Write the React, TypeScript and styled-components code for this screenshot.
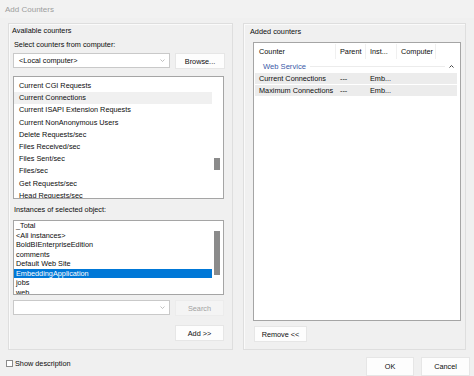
import styled, { createGlobalStyle } from 'styled-components';

const GlobalStyle = createGlobalStyle`
  body {
    margin: 0;
    background: #f0f0f0;
    font-family: "Liberation Sans", Arial, sans-serif;
  }
`;

const Dialog = styled.div`
  width: 474px;
  height: 376px;
  background: #f0f0f0;
  display: flex;
  flex-direction: column;
  overflow: hidden;
  font-size: 7.3px;
  color: #0d0d0d;
`;

const TitleBar = styled.div`
  height: 20px;
  display: flex;
  align-items: center;
  padding: 0 5px;
  font-size: 8px;
  color: #9d9d9d;
  background: #f2f2f2;
`;

const Body = styled.div`
  display: flex;
  gap: 10px;
  padding: 5px 8px 0 8px;
`;

const GroupBox = styled.div<{ w: number }>`
  width: ${({ w }) => w}px;
  height: 327px;
  box-sizing: border-box;
  border: 1px solid #dedede;
  box-shadow: inset 1px 1px 0 #fafafa;
  display: flex;
  flex-direction: column;
  align-items: flex-start;
`;

const Label = styled.div<{ mt?: number; ml?: number }>`
  line-height: 9px;
  height: 9px;
  white-space: nowrap;
  margin-top: ${({ mt }) => mt || 0}px;
  margin-left: ${({ ml }) => ml || 0}px;
`;

const Row = styled.div<{ mt?: number; ml?: number }>`
  display: flex;
  gap: 5px;
  margin-top: ${({ mt }) => mt || 0}px;
  margin-left: ${({ ml }) => ml || 0}px;
`;

const Combo = styled.div`
  width: 157px;
  height: 15px;
  box-sizing: border-box;
  background: #fff;
  border: 1px solid #c9c9c9;
  display: flex;
  align-items: center;
  justify-content: space-between;
  padding: 0 4px 0 5px;
`;

const Button = styled.div<{ w: number; h?: number; disabled?: boolean }>`
  width: ${({ w }) => w}px;
  height: ${({ h }) => h || 16}px;
  box-sizing: border-box;
  background: ${({ disabled }) => (disabled ? '#f4f4f4' : '#fdfdfd')};
  border: 1px solid ${({ disabled }) => (disabled ? '#ececec' : '#e6e6e6')};
  color: ${({ disabled }) => (disabled ? '#a2a2a2' : '#0d0d0d')};
  display: flex;
  align-items: center;
  justify-content: center;
  white-space: nowrap;
`;

const Indent = styled.div`
  margin-left: 4px;
`;

const ListBox = styled.div<{ h: number; mt: number; padTop?: number }>`
  position: relative;
  width: 211px;
  height: ${({ h }) => h}px;
  margin-top: ${({ mt }) => mt}px;
  box-sizing: border-box;
  background: #fff;
  border: 1px solid #a5a5a5;
  padding-top: ${({ padTop }) => padTop || 0}px;
  overflow: hidden;
`;

const ListItem = styled.div<{ h: number; indent: number; state?: 'hover' | 'selected' }>`
  width: 198px;
  height: ${({ h }) => h}px;
  line-height: ${({ h }) => h}px;
  padding-left: ${({ indent }) => indent}px;
  box-sizing: border-box;
  white-space: nowrap;
  background: ${({ state }) =>
    state === 'selected' ? '#0078d7' : state === 'hover' ? '#f0f0f0' : 'transparent'};
  color: ${({ state }) => (state === 'selected' ? '#fff' : '#0d0d0d')};
`;

const Thumb = styled.div<{ top: number; h: number }>`
  position: absolute;
  right: 3px;
  top: ${({ top }) => top}px;
  width: 6px;
  height: ${({ h }) => h}px;
  background: #8b8b8b;
`;

const Table = styled.div`
  width: 208px;
  height: 279px;
  margin-top: 6px;
  margin-left: 9px;
  box-sizing: border-box;
  background: #fff;
  border: 1px solid #a5a5a5;
  padding: 1px;
`;

const Cols = styled.div`
  display: grid;
  grid-template-columns: 81px 30px 31px 39px;
`;

const HeadRow = styled(Cols)`
  height: 15px;
  align-items: center;
`;

const HeadCell = styled.div`
  height: 100%;
  display: flex;
  align-items: center;
  padding-left: 4px;
  border-right: 1px solid #f0f0f0;
  white-space: nowrap;
`;

const GroupHeader = styled.div`
  height: 14px;
  display: flex;
  align-items: center;
  padding: 0 5px 0 8px;
  gap: 4px;
  color: #3a5aa8;
  font-size: 7.6px;
`;

const GroupLine = styled.div`
  flex: 1;
  height: 1px;
  background: #ececec;
`;

const DataRow = styled(Cols)`
  width: 202px;
  height: 11px;
  margin-bottom: 1px;
  background: #ececec;
  align-items: center;
`;

const Cell = styled.div`
  padding-left: 4px;
  white-space: nowrap;
  overflow: hidden;
`;

const Footer = styled.div`
  flex: 1;
  display: flex;
  align-items: flex-start;
  padding: 7px 4px 0 6px;
  gap: 7px;
`;

const CheckLabel = styled.div`
  display: flex;
  align-items: center;
  gap: 2px;
  margin-top: 2px;
  height: 9px;
  margin-right: auto;
`;

const CheckBox = styled.span`
  width: 5px;
  height: 5px;
  border: 1px solid #8a8a8a;
  background: #fff;
`;

const ChevronDown = () => (
  <svg width="5" height="3" viewBox="0 0 5 3">
    <path d="M0.5 0.5 L2.5 2.5 L4.5 0.5" fill="none" stroke="#b0b0b0" strokeWidth="0.8" />
  </svg>
);

const ChevronUp = () => (
  <svg width="5" height="3" viewBox="0 0 5 3">
    <path d="M0.5 2.5 L2.5 0.5 L4.5 2.5" fill="none" stroke="#444" strokeWidth="1" />
  </svg>
);

const counters = [
  'Current CGI Requests',
  'Current Connections',
  'Current ISAPI Extension Requests',
  'Current NonAnonymous Users',
  'Delete Requests/sec',
  'Files Received/sec',
  'Files Sent/sec',
  'Files/sec',
  'Get Requests/sec',
  'Head Requests/sec',
];

const instances = [
  '_Total',
  '<All instances>',
  'BoldBIEnterpriseEdition',
  'comments',
  'Default Web Site',
  'EmbeddingApplication',
  'jobs',
  'web',
];

export default function App() {
  return (
    <>
      <GlobalStyle />
      <Dialog>
        <TitleBar>Add Counters</TitleBar>
        <Body>
          <GroupBox w={225}>
            <Label mt={2} ml={3}>Available counters</Label>
            <Label mt={5} ml={5}>Select counters from computer:</Label>
            <Row mt={4} ml={4}>
              <Combo>
                <span>&lt;Local computer&gt;</span>
                <ChevronDown />
              </Combo>
              <Button w={50}>Browse...</Button>
            </Row>
            <Indent>
              <ListBox h={123} mt={7} padTop={3}>
                {counters.map((c) => (
                  <ListItem key={c} h={12.2} indent={5} state={c === 'Current Connections' ? 'hover' : undefined}>
                    {c}
                  </ListItem>
                ))}
                <Thumb top={81} h={12} />
              </ListBox>
            </Indent>
            <Label mt={6} ml={5}>Instances of selected object:</Label>
            <Indent>
              <ListBox h={75} mt={6}>
                {instances.map((i) => (
                  <ListItem key={i} h={9.5} indent={2} state={i === 'EmbeddingApplication' ? 'selected' : undefined}>
                    {i}
                  </ListItem>
                ))}
                <Thumb top={10} h={44} />
              </ListBox>
            </Indent>
            <Row mt={5} ml={4}>
              <Combo>
                <span />
                <ChevronDown />
              </Combo>
              <Button w={49} disabled>Search</Button>
            </Row>
            <Row mt={9} ml={166}>
              <Button w={49}>Add &gt;&gt;</Button>
            </Row>
          </GroupBox>
          <GroupBox w={223}>
            <Label mt={3} ml={6}>Added counters</Label>
            <Table>
              <HeadRow>
                <HeadCell>Counter</HeadCell>
                <HeadCell>Parent</HeadCell>
                <HeadCell>Inst...</HeadCell>
                <HeadCell>Computer</HeadCell>
              </HeadRow>
              <GroupHeader>
                <span>Web Service</span>
                <GroupLine />
                <ChevronUp />
              </GroupHeader>
              <DataRow>
                <Cell>Current Connections</Cell>
                <Cell>---</Cell>
                <Cell>Emb...</Cell>
                <Cell />
              </DataRow>
              <DataRow>
                <Cell>Maximum Connections</Cell>
                <Cell>---</Cell>
                <Cell>Emb...</Cell>
                <Cell />
              </DataRow>
            </Table>
            <Row mt={5} ml={10}>
              <Button w={53}>Remove &lt;&lt;</Button>
            </Row>
          </GroupBox>
        </Body>
        <Footer>
          <CheckLabel>
            <CheckBox />
            <span>Show description</span>
          </CheckLabel>
          <Button w={48} h={19}>OK</Button>
          <Button w={49} h={19}>Cancel</Button>
        </Footer>
      </Dialog>
    </>
  );
}
